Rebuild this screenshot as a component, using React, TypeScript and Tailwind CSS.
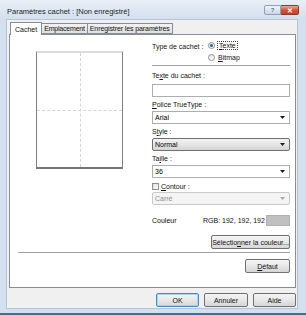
import React from "react";

function Arrow({ muted }: { muted?: boolean }) {
  return (
    <svg width="5" height="3" viewBox="0 0 5 3" className="shrink-0">
      <path d="M0 0h5L2.5 3z" fill={muted ? "#a8a8a8" : "#1a1a1a"} />
    </svg>
  );
}

function Combo({ value, variant = "edit" }: { value: string; variant?: "edit" | "list" | "disabled" }) {
  const styles = {
    edit: "bg-white border-[#abadb3] text-black",
    list: "bg-gradient-to-b from-[#f2f2f2] via-[#e6e6e6] to-[#d4d4d4] border-[#707070] rounded-[2px] text-black",
    disabled: "bg-[#f4f4f4] border-[#c9c9c9] rounded-[2px] text-[#8d8d8d]",
  }[variant];
  return (
    <div className={`h-[13px] flex items-center justify-between pl-[2px] pr-[4px] border ${styles}`}>
      <span>{value}</span>
      <Arrow muted={variant === "disabled"} />
    </div>
  );
}

function Button({ children, w, primary }: { children: React.ReactNode; w: string; primary?: boolean }) {
  return (
    <div
      className={`${w} h-[14px] flex items-center justify-center rounded-[2px] border bg-gradient-to-b from-[#f4f4f4] via-[#e8e8e8] to-[#d6d6d6] ${
        primary ? "border-[#4a8cc2] shadow-[inset_0_0_0_1px_#a9d3f0]" : "border-[#707070]"
      }`}
    >
      {children}
    </div>
  );
}

function Radio({ checked }: { checked?: boolean }) {
  return (
    <div className="w-[7px] h-[7px] rounded-full border border-[#8e8f8f] bg-gradient-to-br from-[#e6e6e6] to-white flex items-center justify-center">
      {checked && <div className="w-[3px] h-[3px] rounded-full bg-[#2f5c96]" />}
    </div>
  );
}

export default function App() {
  return (
    <div className="w-[306px] h-[315px] bg-[#d3e0ef] flex flex-col border-b-2 border-[#4d6985] text-[7px] leading-none text-[#111] font-['Liberation_Sans',Arial,sans-serif] overflow-hidden">
      {/* Title bar */}
      <div className="h-[19px] flex items-start shrink-0 bg-gradient-to-b from-[#e9eff6] to-[#d3e0ef]">
        <span className="pl-[7px] pt-[8px] text-[7.5px] text-[#1e1e1e]">Paramètres cachet : [Non enregistré]</span>
        <div className="ml-auto mr-[7px] mt-[5px] flex">
          <div className="w-[17px] h-[10px] rounded-l-[2px] border border-[#8aa0b9] bg-gradient-to-b from-[#eef3f9] to-[#c9d7e7] flex items-center justify-center text-[6px] font-bold text-[#5a6f86]">
            ?
          </div>
          <div className="w-[18px] h-[10px] rounded-r-[2px] border border-l-0 border-[#8a3a2c] bg-gradient-to-b from-[#e9a99a] via-[#d0533c] to-[#c7402a] flex items-center justify-center text-[7px] font-bold text-white">
            ✕
          </div>
        </div>
      </div>

      {/* Client area */}
      <div className="flex-1 ml-[6px] mr-[8px] mb-[4px] bg-[#f0f0f0] border border-[#b6c6d8] flex flex-col">
        {/* Tabs */}
        <div className="flex items-end h-[13px] pl-[3px] mt-[1px] relative z-10">
          <div className="h-[13px] px-[4px] bg-white border border-b-0 border-[#898c95] flex items-center -mb-px">Cachet</div>
          <div className="h-[11px] px-[2px] tracking-[-0.2px] bg-gradient-to-b from-[#f2f2f2] to-[#e0e0e0] border border-l-0 border-[#898c95] flex items-center">
            Emplacement
          </div>
          <div className="h-[11px] px-[2px] tracking-[-0.1px] bg-gradient-to-b from-[#f2f2f2] to-[#e0e0e0] border border-l-0 border-[#898c95] flex items-center">
            Enregistrer les paramètres
          </div>
        </div>

        {/* Tab panel */}
        <div className="ml-[2px] mr-[1px] h-[254px] bg-white border border-[#898c95] flex flex-col">
          <div className="flex pt-[6px] pl-[26px]">
            {/* Preview */}
            <div className="w-[87px] mt-[10px]">
              <div className="relative h-[118px] border-x border-[#7f7f7f] border-t-2 border-t-[#dcdcdc] border-b-2 border-b-[#767676]">
                <div className="absolute left-1/2 top-0 bottom-0 border-l border-dashed border-[#d4d4d4]" />
                <div className="absolute top-1/2 left-0 right-0 border-t border-dashed border-[#d4d4d4]" />
              </div>
            </div>

            {/* Settings */}
            <div className="ml-[29px] w-[138px] flex flex-col">
              <div className="flex">
                <span className="w-[56px] pt-[2px]">Type de cachet :</span>
                <div className="flex flex-col gap-[3px]">
                  <div className="flex items-center gap-[2px] h-[9px]">
                    <Radio checked />
                    <span className="border border-dotted border-[#444] px-px">
                      <span className="underline">T</span>exte
                    </span>
                  </div>
                  <div className="flex items-center gap-[3px] h-[9px]">
                    <Radio />
                    <span>
                      <span className="underline">B</span>itmap
                    </span>
                  </div>
                </div>
              </div>
              <div className="mt-[3px] border-t border-[#a0a0a0] border-b border-b-white" />

              <span className="mt-[5px] h-[10px]">
                Te<span className="underline">x</span>te du cachet :
              </span>
              <div className="mt-[2px] h-[13px] border border-[#abadb3] bg-white" />

              <span className="mt-[4px] h-[10px]">
                <span className="underline">P</span>olice TrueType :
              </span>
              <Combo value="Arial" />

              <span className="mt-[4px] h-[10px]">
                S<span className="underline">t</span>yle :
              </span>
              <Combo value="Normal" variant="list" />

              <span className="mt-[4px] h-[10px]">
                Ta<span className="underline">i</span>lle :
              </span>
              <Combo value="36" />

              <div className="mt-[3px] h-[10px] flex items-center gap-[2px]">
                <div className="w-[7px] h-[7px] border border-[#8e8f8f] bg-gradient-to-br from-[#dedede] to-white" />
                <span>
                  <span className="underline">C</span>ontour :
                </span>
              </div>
              <div className="mt-[1px]">
                <Combo value="Carré" variant="disabled" />
              </div>

              <div className="mt-[10px] flex items-center h-[11px]">
                <span className="w-[51px]">Couleur</span>
                <span>RGB: 192, 192, 192</span>
                <div className="ml-auto w-[24px] h-[11px] bg-[#c0c0c0] border border-[#b0b0b0]" />
              </div>

              <div className="mt-[9px] flex justify-end">
                <Button w="w-[79px]">
                  <span>
                    Sélectio<span className="underline">n</span>ner la couleur...
                  </span>
                </Button>
              </div>
            </div>
          </div>

          <div className="mt-[3px] ml-[8px] mr-[5px] border-t border-[#a0a0a0] border-b border-b-white" />
          <div className="mt-[5px] mr-[5px] flex justify-end">
            <Button w="w-[45px]">
              <span>
                <span className="underline">D</span>éfaut
              </span>
            </Button>
          </div>
        </div>

        {/* Dialog buttons */}
        <div className="mt-[5px] mr-[1px] flex justify-end gap-[5px]">
          <Button w="w-[43px]" primary>
            OK
          </Button>
          <Button w="w-[44px]">Annuler</Button>
          <Button w="w-[43px]">Aide</Button>
        </div>
      </div>
    </div>
  );
}
